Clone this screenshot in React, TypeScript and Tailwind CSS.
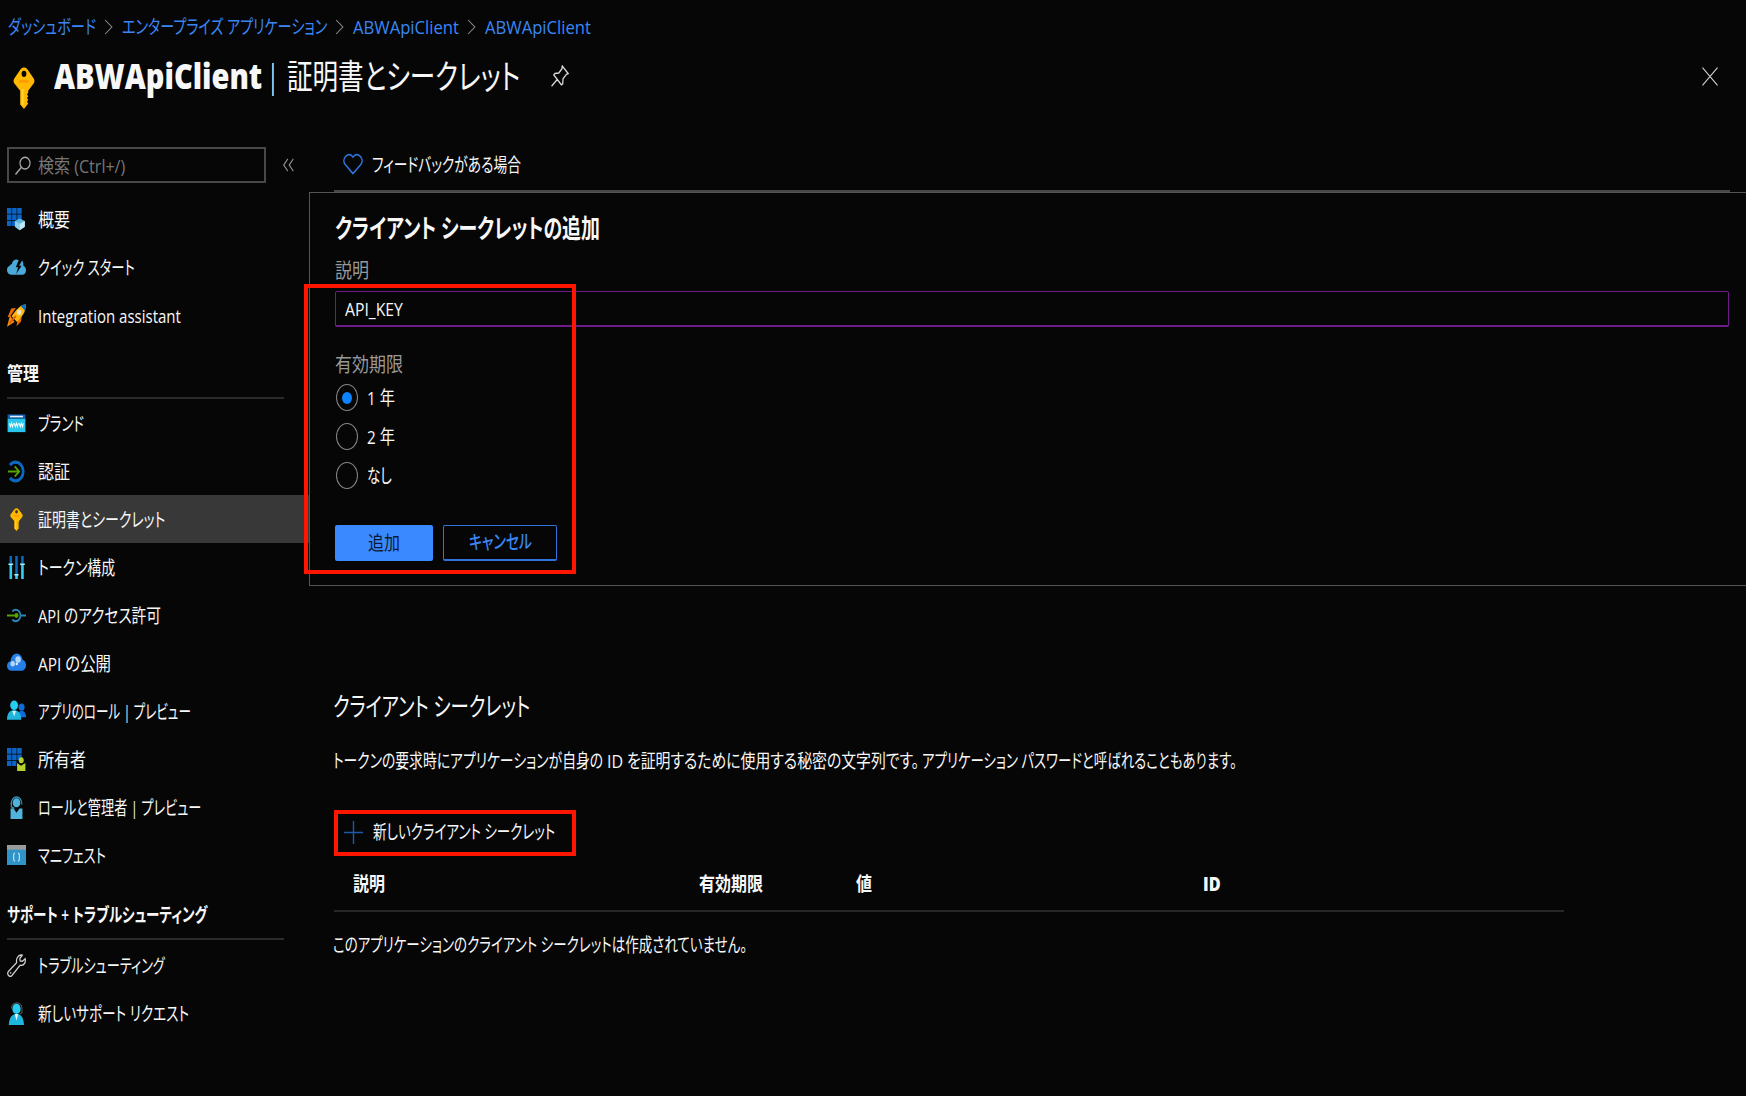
import React, { useLayoutEffect, useRef, useState } from "react";

type FitProps = { children: React.ReactNode; className?: string };

// Condensed label: squeezes its text to the width given by the class name
const Fit = ({ children, className = "" }: FitProps) => {
  const outer = useRef<HTMLSpanElement>(null);
  const inner = useRef<HTMLSpanElement>(null);
  const [scale, setScale] = useState(0.82);

  useLayoutEffect(() => {
    if (outer.current && inner.current) {
      setScale(outer.current.clientWidth / inner.current.offsetWidth);
    }
  }, []);

  return (
    <span ref={outer} className={`block shrink-0 whitespace-nowrap ${className}`}>
      <span ref={inner} className="inline-block origin-left" style={{ transform: `scaleX(${scale})` }}>
        {children}
      </span>
    </span>
  );
};

type IconProps = { children: React.ReactNode; className?: string; viewBox?: string };

const Icon = ({ children, className = "w-[19px] h-[23px]", viewBox = "0 0 16 16" }: IconProps) => (
  <svg viewBox={viewBox} preserveAspectRatio="none" fill="none" className={`shrink-0 ${className}`}>
    {children}
  </svg>
);

const Grid = () => (
  <path
    fill="#0b63c5"
    d="M0 0h3.8v4H0zM4.3 0h3.8v4H4.3zM8.6 0h3.8v4H8.600zM0 4.500h3.800v3.800H0zM4.300 4.500h3.800v3.800H4.300zM8.600 4.500h3.800v3.800H8.600zM0 8.800h3.800v3.700H0zM4.300 8.800h3.800v3.700H4.300z"
  />
);

const KeyShape = () => (
  <>
    <path
      fill="#ffb900"
      fillRule="evenodd"
      d="M8 .2c.7 0 1.200.2 1.700.7l3 3.300c.7.8.7 1.500 0 2.200L10.100 9v.8l-.6.600.6.700-.6.700.6.700-.6.700.6.700L8 16l-1.900-1.700V9L3.300 6.400c-.7-.7-.7-1.400 0-2.200l3-3.300C6.800.4 7.300.2 8 .2zm0 1.200a1.200 1.200 0 1 0 0 2.400 1.200 1.200 0 0 0 0-2.400z"
    />
    <path d="M5.600 4.900h4.800v1.100H5.600z" fill="#ff9c00" />
    <path d="M7.300 8.500v6" stroke="#ffd52e" />
  </>
);

const icons = {
  overview: (
    <Icon>
      <Grid />
      <path d="m10.700 7.300 4.300 1.800v4l-4.300 2.400-4-2.400v-4z" fill="#5db4df" />
      <path d="m6.700 9.100 4 1.800v4.600l-4-2.400z" fill="#8cd0ed" />
      <path d="m15 9.100-4.300 1.800v4.600l4.300-2.400z" fill="#c3e7f6" />
    </Icon>
  ),
  quick: (
    <Icon>
      <path d="M3.500 13C1.300 13 0 11.600 0 9.800 0 8.200.9 7.200 2.200 7c.3-1 .9-1.300 1.800-1.300C4.600 3.600 6 2.500 7.900 2.500c.7 0 1.400.200 1.900.5L7.400 7.900h2l-1.700 4.700 4.600-5.800h-2l2.300-3.600c1 .9 1.300 2.300 1.200 3.500C15.200 7.100 16 8.400 16 10c0 1.700-1.300 3-3 3z" fill="#4aa9d8" />
    </Icon>
  ),
  rocket: (
    <Icon>
      <path d="M3.500 3.200 7.500 2.800l-5 6-2 .500zM12.500 9l-.8 3.400-3.700 3.100.8-4z" fill="#e86c00" />
      <path d="M0 15.800 2.500 8l3.800 4.600z" fill="#f58b14" />
      <path d="M15.800.2c.2 3.800-1.200 7.200-7.300 12.300L3.800 8.600C8.300 3.400 11.500.6 15.800.2z" fill="#ffb60d" />
      <path d="M15.800.2c.1 1.500-.2 3-.9 4.400l-3.500-3.300c1.300-.7 2.700-1 4.400-1.100z" fill="#0f6cbd" />
      <circle cx="10.200" cy="5.800" r="1.900" fill="#e8e2c8" />
      <path d="m2.200 13.300 5.300-5" stroke="#e06000" strokeWidth="1.500" />
    </Icon>
  ),
  brand: (
    <Icon>
      <path d="M.5 1.700h15v3H.5z" fill="#0f61b5" />
      <path d="M2.500 2.600h11v1.100h-11z" fill="#e3effa" />
      <path d="M.5 4.700h15v9.300H.5z" fill="#29c5ea" />
      <path d="m2 7.800.8 2.500.9-2.500.9 2.500.8-2.500m.8 0 .8 2.500.9-2.500.9 2.500.8-2.500m.8 0 .8 2.500.9-2.500.9 2.500.8-2.500" stroke="#fff" strokeWidth=".8" />
    </Icon>
  ),
  auth: (
    <Icon>
      <path d="M2.500 3.500a6.500 6.500 0 1 1 0 9" stroke="#0b68c1" strokeWidth="2.300" />
      <path d="M.8 8h9M6.500 4.500 10.300 8l-3.800 3.500" stroke="#57a300" strokeWidth="1.300" />
    </Icon>
  ),
  key: (
    <Icon>
      <KeyShape />
    </Icon>
  ),
  token: (
    <Icon>
      <path d="M3.200 0v6M8 0v12.500M13 0v6" stroke="#0b68c1" strokeWidth="2.100" />
      <path d="M3.200 6v10M8 13v3M13 6v10" stroke="#35cdf0" strokeWidth="2.200" />
      <path d="M1.200 5.800h4M6.200 13h3.600M11 5.800h4" stroke="#a5efff" strokeWidth="1" />
    </Icon>
  ),
  permission: (
    <Icon>
      <path d="M4.500 5.200a4 4 0 1 1 0 5.600M12 8h4" stroke="#2b86b8" strokeWidth="1.400" />
      <path d="M0 8h7" stroke="#57a300" strokeWidth="1.400" />
      <circle cx="8" cy="8" r="1.700" fill="#57a300" />
    </Icon>
  ),
  expose: (
    <Icon>
      <path d="M3.600 13C1.500 13 0 11.700 0 9.800 0 8 1.200 6.800 3 6.500 3.300 3.500 5.400 1 8.200 1c2.500 0 4.400 2 5 4.500 1.700.2 2.800 1.700 2.800 3.500 0 2.300-1.500 4-3.700 4z" fill="#2480e6" />
      <circle cx="9.300" cy="5.300" r="2.300" fill="#b5d6f8" />
      <circle cx="4.800" cy="8.200" r="1.900" fill="#b5d6f8" />
      <circle cx="8.200" cy="8.300" r="1" fill="#e2effc" />
    </Icon>
  ),
  appRoles: (
    <Icon>
      <circle cx="12.300" cy="5" r="2.500" fill="#0f6cd6" />
      <path d="M9 12c0-3 1.200-4.600 3.300-4.600S16 9 16 12z" fill="#0f6cd6" />
      <path d="M0 13.700c0-4 2-6.700 5.800-6.700s6.200 2.700 6.200 6.700z" fill="#20b5dc" />
      <circle cx="6" cy="3.700" r="3.300" fill="#27cdf2" />
      <path d="m4.500 7.700 1.500 3.800 1.500-3.800z" fill="#d5f5fc" />
    </Icon>
  ),
  owners: (
    <Icon>
      <Grid />
      <path d="M8 9.500h8V16H8z" fill="#060606" />
      <path d="M8.500 16v-5.500l3.300 1.800 3.700-1.800V16z" fill="#b4d02a" />
      <circle cx="12" cy="8.500" r="2.100" fill="#b4d02a" />
    </Icon>
  ),
  admins: (
    <Icon>
      <path d="M3.500 6c-.3-7 9.300-7 9 0" stroke="#3b8eb5" strokeWidth="1" />
      <circle cx="8" cy="4.700" r="3.200" fill="#4fb3de" />
      <path d="M3.700 4v3.500l2.500 1.200" stroke="#3b8eb5" />
      <path d="M3 16V8.700h2.500L8 11.700l2.500-3H13V16z" fill="#4fb3de" />
    </Icon>
  ),
  manifest: (
    <Icon className="h-5 w-[19px]">
      <path d="M0 0h16v16H0z" fill="#2f93c8" />
      <path d="M0 0h16v3.700H0z" fill="#9b9b9b" />
      <path d="M6.800 6.500c-1 0-1.200.4-1.200 1.400v3.500c0 1 .2 1.400 1.200 1.400M9.200 6.500c1 0 1.200.4 1.200 1.400v3.500c0 1-.2 1.400-1.200 1.400" stroke="#b9e2f5" />
    </Icon>
  ),
  wrench: (
    <Icon>
      <path
        d="M15.300 3.300c.7 2.700-1.200 5.200-4.300 4.500L4.200 15c-1.600 1.500-4.600-.5-3.200-2.600L8.200 6C7.300 3.200 9.500.3 12.800.8l-2 2.300.3 1.700 1.900.3z"
        stroke="#d2d2d2"
        strokeWidth="1"
      />
      <path d="m2.700 13.500.8-.8" stroke="#d2d2d2" />
    </Icon>
  ),
  support: (
    <Icon>
      <path d="M3.800 4.500C4-.7 12.500-.7 12.600 4.500v2.800L10.500 8.700" stroke="#555" strokeWidth=".9" />
      <circle cx="8" cy="4.800" r="3.500" fill="#27cdf2" />
      <path d="M1.500 16C1.800 11 4 8.300 8 8.300s6 2.700 6.300 7.700z" fill="#1fb6dd" />
      <path d="M6.500 8.400 8 13l1.500-4.600z" fill="#e0f7fc" />
    </Icon>
  ),
};

type Item = { icon: React.ReactNode; label: string; width: string; active?: boolean };

const general: Item[] = [
  { icon: icons.overview, label: "概要", width: "w-8" },
  { icon: icons.quick, label: "クイック スタート", width: "w-[97px]" },
  { icon: icons.rocket, label: "Integration assistant", width: "w-[143px]" },
];

const manage: Item[] = [
  { icon: icons.brand, label: "ブランド", width: "w-[46px]" },
  { icon: icons.auth, label: "認証", width: "w-8" },
  { icon: icons.key, label: "証明書とシークレット", width: "w-[127px]", active: true },
  { icon: icons.token, label: "トークン構成", width: "w-[77px]" },
  { icon: icons.permission, label: "API のアクセス許可", width: "w-[123px]" },
  { icon: icons.expose, label: "API の公開", width: "w-[73px]" },
  { icon: icons.appRoles, label: "アプリのロール | プレビュー", width: "w-[153px]" },
  { icon: icons.owners, label: "所有者", width: "w-12" },
  { icon: icons.admins, label: "ロールと管理者 | プレビュー", width: "w-[163px]" },
  { icon: icons.manifest, label: "マニフェスト", width: "w-[68px]" },
];

const support: Item[] = [
  { icon: icons.wrench, label: "トラブルシューティング", width: "w-[127px]" },
  { icon: icons.support, label: "新しいサポート リクエスト", width: "w-[151px]" },
];

const MenuList = ({ items }: { items: Item[] }) => (
  <ul>
    {items.map(({ icon, label, width, active }) => (
      <li key={label} className={`flex h-12 items-center gap-3 pl-[7px] ${active ? "bg-[#383838]" : ""}`}>
        {icon}
        <Fit className={`pt-0.5 ${width}`}>{label}</Fit>
      </li>
    ))}
  </ul>
);

const Crumb = ({ children, className }: FitProps) => (
  <a href="#" className="text-[#3a86f5]">
    <Fit className={className}>{children}</Fit>
  </a>
);

const Separator = () => (
  <Icon viewBox="0 0 8 16" className="mr-[9px] ml-2 h-4 w-[9px]">
    <path d="m1 1 6 7-6 7" stroke="#888" />
  </Icon>
);

const Header = () => (
  <header className="h-[147px]">
    <nav className="flex h-[53px] items-center pl-2">
      <Crumb className="w-[88px]">ダッシュボード</Crumb>
      <Separator />
      <Crumb className="w-[205px]">エンタープライズ アプリケーション</Crumb>
      <Separator />
      <Crumb className="w-[106px]">ABWApiClient</Crumb>
      <Separator />
      <Crumb className="w-[106px]">ABWApiClient</Crumb>
    </nav>
    <div className="flex h-[46px] items-center pl-2 text-[34px]">
      <Icon className="mt-6 h-[42px] w-8">
        <KeyShape />
      </Icon>
      <Fit className="ml-[14px] w-[208px] text-[35px] font-extrabold">ABWApiClient</Fit>
      <Fit className="ml-[6px] w-[10px] text-[32px] text-white">|</Fit>
      <Fit className="ml-[9px] w-[233px]">証明書とシークレット</Fit>
      <Icon className="ml-[31px] h-[22px] w-[18px]">
        <path d="m10 .8 5.200 5.400-1.500.6-3 3.200-.3 3.700-1.200.7L2.500 7.300l1-1.200 3.400-.3 2.800-3zM5.500 10.500.5 15.500" stroke="#ddd" strokeWidth="1.100" />
      </Icon>
      <Icon className="mr-7 ml-auto h-[19px] w-4">
        <path d="m.5.500 15 15m0-15-15 15" stroke="#d5d5d5" strokeWidth="1.100" />
      </Icon>
    </div>
  </header>
);

const SectionTitle = ({ children, className }: FitProps) => (
  <div className="mr-[25px] ml-[7px] border-b-2 border-[#2b2b2b] font-semibold">
    <Fit className={className}>{children}</Fit>
  </div>
);

const Sidebar = () => (
  <aside className="w-[309px] shrink-0">
    <div className="flex items-center">
      <div className="ml-[7px] flex h-9 w-[259px] items-center border-2 border-[#484848] pl-[6px] text-[#777]">
        <Icon className="h-[19px] w-4">
          <circle cx="10" cy="6" r="5" stroke="#aaa" strokeWidth="1.200" />
          <path d="M6.500 9.500.5 15.500" stroke="#aaa" strokeWidth="1.300" />
        </Icon>
        <Fit className="ml-[7px] w-[87px] pt-px">検索 (Ctrl+/)</Fit>
      </div>
      <Icon className="ml-[17px] h-[14px] w-[11px]">
        <path d="M7 1 1 8l6 7M15 1 9 8l6 7" stroke="#999" strokeWidth="1.400" />
      </Icon>
    </div>
    <div className="pt-3">
      <MenuList items={general} />
    </div>
    <div className="flex h-[60px] flex-col justify-end">
      <SectionTitle className="h-[37px] w-8">管理</SectionTitle>
    </div>
    <MenuList items={manage} />
    <div className="mb-px flex h-[61px] flex-col justify-end">
      <SectionTitle className="h-[37px] w-[200px]">サポート + トラブルシューティング</SectionTitle>
    </div>
    <MenuList items={support} />
  </aside>
);

type RadioProps = { checked?: boolean; children: React.ReactNode };

const Radio = ({ checked, children }: RadioProps) => (
  <label className="flex h-[39px] items-center gap-[9px] pl-px">
    <span className="flex h-[27px] w-[22px] items-center justify-center rounded-[50%] border border-[#858585]">
      {checked && <span className="h-3 w-[10px] rounded-[50%] bg-[#0a84ff]" />}
    </span>
    {children}
  </label>
);

const AddSecretPanel = () => (
  <section className="relative h-[394px] border border-r-0 border-[#555] pt-[14px] pr-[17px] pl-[25px]">
    <h2 className="flex h-[42px] items-center text-[26px] font-semibold">
      <Fit className="w-[265px]">クライアント シークレットの追加</Fit>
    </h2>
    <div className="flex h-[42px] items-center pt-0.5 text-[20px] text-[#999]">
      <Fit className="w-[34px]">説明</Fit>
    </div>
    <div className="flex h-9 items-center rounded-xs border border-b-2 border-[#701c88] pl-[9px]">
      <Fit className="w-[58px] pt-px">API_KEY</Fit>
    </div>
    <div className="mt-4 flex h-[42px] items-center pt-px text-[20px] text-[#999]">
      <Fit className="w-[68px]">有効期限</Fit>
    </div>
    <div className="-mt-[7px]">
      <Radio checked>
        <Fit className="w-[28px]">1 年</Fit>
      </Radio>
      <Radio>
        <Fit className="w-[28px]">2 年</Fit>
      </Radio>
      <Radio>
        <Fit className="w-[25px]">なし</Fit>
      </Radio>
    </div>
    <div className="mt-[30px] flex gap-[10px]">
      <button className="flex h-9 w-[98px] items-center justify-center rounded-xs bg-[#3a89ff] pb-px text-[#0a1a35]">
        <Fit className="w-8">追加</Fit>
      </button>
      <button className="flex h-9 w-[114px] items-center justify-center rounded-xs border border-b-2 border-[#2f74dd] pb-px text-[#3a86f5]">
        <Fit className="w-[63px] font-medium">キャンセル</Fit>
      </button>
    </div>
    <div className="absolute top-[91px] -left-[6px] h-[290px] w-[272px] border-4 border-[#ff1500]" />
  </section>
);

const SecretTable = () => (
  <section className="pl-[25px]">
    <h2 className="-ml-px flex h-10 items-center text-[26px]">
      <Fit className="w-[197px]">クライアント シークレット</Fit>
    </h2>
    <p className="mt-[15px] -ml-px flex h-10 items-center">
      <Fit className="w-[270px]">トークンの要求時にアプリケーションが自身の</Fit>
      <Fit className="ml-1 w-4">ID</Fit>
      <Fit className="ml-1 w-[292px]">を証明するために使用する秘密の文字列です。</Fit>
      <Fit className="ml-[3px] w-[315px]">アプリケーション パスワードと呼ばれることもあります。</Fit>
    </p>
    <button className="mt-[29px] flex h-[46px] w-[242px] items-center gap-[10px] border-4 border-[#ff1500] pb-0.5 pl-[6px]">
      <Icon>
        <path d="M8 0v16M0 8h16" stroke="#1f58aa" strokeWidth="1.200" />
      </Icon>
      <Fit className="w-[182px]">新しいクライアント シークレット</Fit>
    </button>
    <div className="flex h-[56px] w-[1230px] items-center border-b-2 border-[#272727] pt-px pl-[19px] font-semibold">
      <Fit className="mr-[314px] w-8">説明</Fit>
      <Fit className="mr-[93px] w-16">有効期限</Fit>
      <Fit className="mr-[331px] w-4">値</Fit>
      <Fit className="w-[18px] font-extrabold">ID</Fit>
    </div>
    <p className="-ml-px flex h-[66px] items-center">
      <Fit className="w-[414px]">このアプリケーションのクライアント シークレットは作成されていません。</Fit>
    </p>
  </section>
);

const App = () => {
  return (
    <div className="h-[1096px] w-[1746px] overflow-hidden bg-[#060606] font-['Open_Sans','Noto_Sans_CJK_JP',sans-serif] text-[19px] leading-[28px] text-[#f7f7f7] [font-feature-settings:'palt']">
      <Header />
      <div className="flex">
        <Sidebar />
        <main className="min-w-0 flex-1">
          <div className="mr-4 ml-[25px] flex h-[45px] items-start border-b-2 border-[#484848] pt-[3px] pl-[9px]">
            <Icon className="mt-[3px] h-[22px] w-5">
              <path d="M8 15 1.600 8.200C-1.500 4 4.500-1.800 8 3c3.500-4.800 9.500 1 6.400 5.200z" stroke="#2f74dd" strokeWidth="1.200" />
            </Icon>
            <Fit className="ml-[9px] w-[149px] pt-px">フィードバックがある場合</Fit>
          </div>
          <AddSecretPanel />
          <div className="h-[100px]" />
          <SecretTable />
        </main>
      </div>
    </div>
  );
};

export default App;
